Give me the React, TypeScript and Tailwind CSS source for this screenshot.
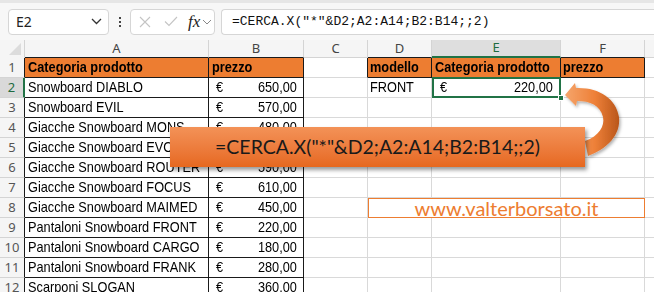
import React from "react";

const W = [25, 184, 95, 64, 64, 129, 84, 9];
const cellFont = { fontFamily: '"Liberation Sans",Arial,sans-serif' } as React.CSSProperties;

type Row = { a: string; b: string };
const rows: Row[] = [
  { a: "Snowboard DIABLO", b: "650,00" },
  { a: "Snowboard EVIL", b: "570,00" },
  { a: "Giacche Snowboard MONS", b: "480,00" },
  { a: "Giacche Snowboard EVO", b: "520,00" },
  { a: "Giacche Snowboard ROUTER", b: "590,00" },
  { a: "Giacche Snowboard FOCUS", b: "610,00" },
  { a: "Giacche Snowboard MAIMED", b: "450,00" },
  { a: "Pantaloni Snowboard FRONT", b: "220,00" },
  { a: "Pantaloni Snowboard CARGO", b: "180,00" },
  { a: "Pantaloni Snowboard FRANK", b: "280,00" },
  { a: "Scarponi SLOGAN", b: "360,00" },
];

function T({ children, right }: { children: React.ReactNode; right?: boolean }) {
  return (
    <span className={"inline-block shrink-0 whitespace-nowrap scale-x-[0.85] " + (right ? "origin-right" : "origin-left")}>
      {children}
    </span>
  );
}

function RowHeader({ n, sel }: { n: number; sel?: boolean }) {
  return (
    <div
      className={
        "w-[25px] h-full shrink-0 flex items-center justify-center text-[13px] border-b border-[#d4d4d4] " +
        (sel ? "bg-[#d9d9d9] text-[#1e6b41] border-r-2 border-r-[#217346]" : "bg-[#f5f5f5] text-[#555] border-r border-r-[#1a1a1a]")
      }
      style={{ fontFamily: '"Noto Sans",sans-serif' }}
    >
      {n}
    </div>
  );
}

function Blank({ w, extra = "" }: { w: number; extra?: string }) {
  return <div className={"h-full shrink-0 border-r border-b border-[#d9d9d9] " + extra} style={{ width: w }} />;
}

export default function App() {
  return (
    <div className="relative w-[654px] h-[292px] overflow-hidden bg-white" style={cellFont}>
      {/* formula bar */}
      <div className="h-[40px] bg-[#f7f7f7] border-t-[3px] border-[#e6e6e6] flex items-center pl-[8px] gap-0">
        <div className="w-[101px] h-[26px] bg-white border border-[#d6d6d6] rounded-[4px] flex items-center justify-between pl-[7px] pr-[6px]">
          <span className="text-[14px] text-[#222]" style={{ fontFamily: '"Noto Sans",sans-serif' }}>E2</span>
          <svg width="11" height="7" viewBox="0 0 11 7"><path d="M1 1l4.5 4.5L10 1" stroke="#333" strokeWidth="1.3" fill="none" /></svg>
        </div>
        <div className="w-[21px] flex flex-col items-center gap-[2px]">
          <div className="w-[2px] h-[2px] bg-[#444]" />
          <div className="w-[2px] h-[2px] bg-[#444]" />
          <div className="w-[2px] h-[2px] bg-[#444]" />
        </div>
        <div className="w-[85px] h-[26px] bg-white border border-[#d6d6d6] rounded-[4px] flex items-center pl-[8px]">
          <svg width="12" height="12" viewBox="0 0 12 12"><path d="M1 1l10 10M11 1L1 11" stroke="#c4c4c4" strokeWidth="1.1" /></svg>
          <svg className="ml-[13px]" width="14" height="11" viewBox="0 0 14 11"><path d="M1 5.5l4 4L13 1" stroke="#c4c4c4" strokeWidth="1.1" fill="none" /></svg>
          <span className="ml-[10px] text-[17px] italic text-[#222] leading-none" style={{ fontFamily: '"Liberation Serif",serif' }}>fx</span>
          <svg className="ml-[2px]" width="10" height="6" viewBox="0 0 10 6"><path d="M1 1l4 4 4-4" stroke="#888" strokeWidth="1" fill="none" /></svg>
        </div>
        <div className="ml-[6px] flex-1 h-[26px] bg-white border border-[#d6d6d6] rounded-l-[4px] border-r-0 flex items-center pl-[10px]">
          <span className="text-[13px] text-[#111]" style={{ fontFamily: '"Liberation Mono",monospace' }}>=CERCA.X("*"&amp;D2;A2:A14;B2:B14;;2)</span>
        </div>
      </div>

      {/* column headers */}
      <div className="flex h-[18px] bg-[#f5f5f5]" style={{ fontFamily: '"Noto Sans",sans-serif' }}>
        <div className="w-[25px] h-full shrink-0 border-r border-[#d4d4d4] relative">
          <div className="absolute right-[3px] bottom-[3px] w-0 h-0 border-l-[12px] border-l-transparent border-b-[12px] border-b-[#dcdcdc]" />
        </div>
        {["A", "B", "C", "D", "E", "F"].map((l, i) => (
          <div
            key={l}
            className={
              "h-full shrink-0 flex items-center justify-center text-[13px] border-r border-r-[#d4d4d4] " +
              (l === "E" ? "bg-[#dedede] text-[#1e6b41] border-b-2 border-b-[#217346]" : "text-[#444] " + (l === "C" ? "border-b border-b-[#d4d4d4]" : "border-b border-b-[#1a1a1a]"))
            }
            style={{ width: W[i + 1] }}
          >
            {l}
          </div>
        ))}
        <div className="flex-1 border-b border-[#d4d4d4]" />
      </div>

      {/* row 1 */}
      <div className="flex h-[20px]">
        <RowHeader n={1} />
        <div className="h-full shrink-0 bg-[#ed7d31] border-r border-b border-[#1a1a1a] flex items-center pl-[3px] text-[15px] font-bold text-black overflow-hidden" style={{ width: W[1] }}><T>Categoria prodotto</T></div>
        <div className="h-full shrink-0 bg-[#ed7d31] border-r border-b border-[#1a1a1a] flex items-center pl-[3px] text-[15px] font-bold text-black overflow-hidden" style={{ width: W[2] }}><T>prezzo</T></div>
        <div className="h-full shrink-0 border-r border-r-[#1a1a1a] border-b border-b-[#d9d9d9]" style={{ width: W[3] }} />
        <div className="h-full shrink-0 bg-[#ed7d31] border-r border-b border-[#1a1a1a] flex items-center pl-[2px] text-[15px] font-bold text-black overflow-hidden" style={{ width: W[4] }}><T>modello</T></div>
        <div className="h-full shrink-0 bg-[#ed7d31] border-r border-b border-[#1a1a1a] flex items-center pl-[3px] text-[15px] font-bold text-black overflow-hidden" style={{ width: W[5] }}><T>Categoria prodotto</T></div>
        <div className="h-full shrink-0 bg-[#ed7d31] border-r border-b border-[#1a1a1a] flex items-center pl-[2px] text-[15px] font-bold text-black overflow-hidden" style={{ width: W[6] }}><T>prezzo</T></div>
        <div className="flex-1 h-full border-b border-[#d9d9d9]" />
      </div>

      {rows.map((r, i) => {
        const n = i + 2;
        return (
          <div key={n} className="flex h-[20px]">
            <RowHeader n={n} sel={n === 2} />
            <div className="h-full shrink-0 border-r border-b border-[#1a1a1a] flex items-center pl-[3px] text-[15px] text-black overflow-hidden" style={{ width: W[1] }}><T>{r.a}</T></div>
            <div className="h-full shrink-0 border-r border-b border-[#1a1a1a] flex items-center justify-between pl-[7px] pr-[6px] text-[15px] text-black overflow-hidden" style={{ width: W[2] }}>
              <T>€</T>
              <T right>{r.b}</T>
            </div>
            {n === 2 ? (
              <>
                <Blank w={W[3]} />
                <div className="h-full shrink-0 border-r border-b border-[#d9d9d9] flex items-center pl-[2px] text-[15px] text-black overflow-hidden" style={{ width: W[4] }}><T>FRONT</T></div>
                <div className="relative h-full shrink-0 border-r border-b border-[#d9d9d9] flex items-center justify-between pl-[8px] pr-[7px] text-[15px] text-black" style={{ width: W[5] }}>
                  <T>€</T>
                  <T right>220,00</T>
                  <div className="absolute left-0 top-[-1px] right-[-1px] bottom-[-1px] border-2 border-[#217346]" />
                  <div className="absolute right-[-4px] bottom-[-4px] w-[6px] h-[6px] bg-[#217346] border border-white" />
                </div>
                <Blank w={W[6]} />
              </>
            ) : n === 8 ? (
              <>
                <Blank w={W[3]} />
                <div className="h-full shrink-0 border border-[#ed7d31] flex items-center justify-center text-[20px] text-[#ed7d31] leading-none" style={{ width: W[4] + W[5] + W[6], fontFamily: 'Lato,"Open Sans",sans-serif' }}>www.valterborsato.it</div>
              </>
            ) : (
              <>
                <Blank w={W[3]} />
                <Blank w={W[4]} />
                <Blank w={W[5]} />
                <Blank w={W[6]} />
              </>
            )}
            <div className="flex-1 h-full border-b border-[#d9d9d9]" />
          </div>
        );
      })}

      {/* curved arrow */}
      <svg className="absolute left-0 top-0 pointer-events-none" width="654" height="292" viewBox="0 0 654 292">
        <defs>
          <linearGradient id="arr" x1="0" y1="0" x2="1" y2="0">
            <stop offset="0" stopColor="#f5a56c" />
            <stop offset="0.55" stopColor="#ee8038" />
            <stop offset="1" stopColor="#b9561b" />
          </linearGradient>
          <filter id="sh" x="-20%" y="-20%" width="140%" height="140%">
            <feDropShadow dx="1.5" dy="2" stdDeviation="1.5" floodColor="#000" floodOpacity="0.3" />
          </filter>
        </defs>
        <path
          d="M565,95 L575,83 L576,88 C598,87 616,98 619,117 C621,135 607,149 588,156 L585,141 C599,136 605,126 603,117 C600,105 590,101 577,101 L576,106 Z"
          fill="url(#arr)"
          filter="url(#sh)"
        />
      </svg>

      {/* callout */}
      <div
        className="absolute left-[170px] top-[127px] w-[415px] h-[40px] flex items-center justify-center bg-gradient-to-b from-[#f39257] to-[#e6681e] shadow-[2px_3px_4px_rgba(0,0,0,0.4)] text-[19.5px] text-[#1a1a1a]"
        style={{ fontFamily: 'Lato,"Open Sans",sans-serif' }}
      >
        =CERCA.X("*"&amp;D2;A2:A14;B2:B14;;2)
      </div>
    </div>
  );
}
